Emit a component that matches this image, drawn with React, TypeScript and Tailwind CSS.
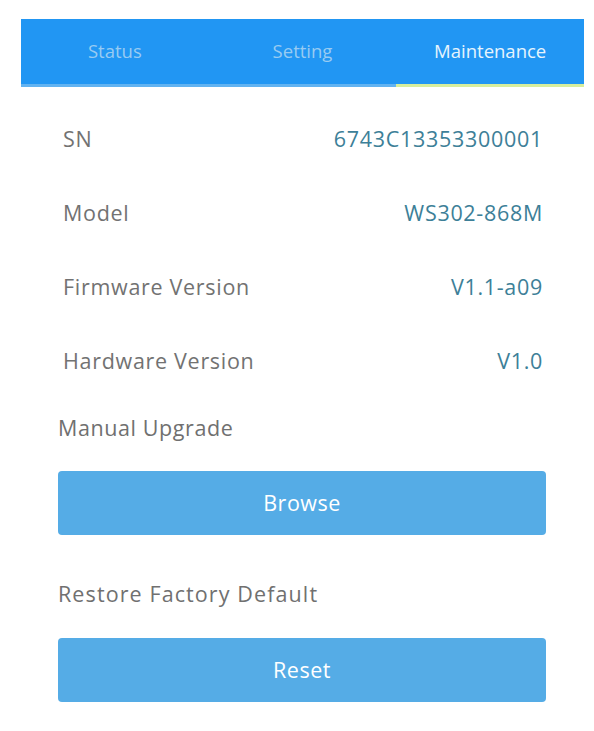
import React from 'react';

const tabs = [
    { label: 'Status', active: false },
    { label: 'Setting', active: false },
    { label: 'Maintenance', active: true },
];

const rows = [
    { label: 'SN', value: '6743C13353300001' },
    { label: 'Model', value: 'WS302-868M' },
    { label: 'Firmware Version', value: 'V1.1-a09' },
    { label: 'Hardware Version', value: 'V1.0' },
];

export default function App() {
    return (
        <div
            className="w-[594px] h-[731px] bg-white overflow-hidden"
            style={{ fontFamily: '"Open Sans", "Liberation Sans", sans-serif' }}
        >
            {/* tab bar */}
            <div className="pt-[19px] pl-[21px] pr-[10px]">
                <div className="flex h-[68px] bg-[#2196f3]">
                    {tabs.map((t) => (
                        <div key={t.label} className="flex-1 flex flex-col">
                            <div
                                className={
                                    t.active
                                        ? 'flex-1 flex items-center justify-center text-[18.5px] text-[#e6f4fd] pb-[1px]'
                                        : 'flex-1 flex items-center justify-center text-[18.5px] text-[#98cbf2] pb-[1px]'
                                }
                            >
                                {t.label}
                            </div>
                            <div className={t.active ? 'h-[3px] bg-[#d7ee9c]' : 'h-[3px] bg-[#62b3f1]'} />
                        </div>
                    ))}
                </div>
            </div>

            {/* info rows */}
            <div className="pt-[15px]">
                {rows.map((r) => (
                    <div
                        key={r.label}
                        className="h-[74px] flex items-center justify-between pl-[63px] pr-[51px] text-[21.5px] tracking-[0.7px]"
                    >
                        <span className="text-[#727272]">{r.label}</span>
                        <span className="text-[#3d7f98]">{r.value}</span>
                    </div>
                ))}
            </div>

            {/* actions */}
            <div className="pl-[58px] pr-[48px]">
                <div className="mt-[15px] h-[30px] flex items-center text-[21.5px] tracking-[0.6px] text-[#707070]">
                    Manual Upgrade
                </div>
                <button
                    type="button"
                    className="mt-[28px] w-full h-[64px] rounded-[4px] bg-[#55ace6] text-white text-[21.5px] tracking-[0.5px] flex items-center justify-center"
                >
                    Browse
                </button>
                <div className="mt-[44px] h-[30px] flex items-center text-[21.5px] tracking-[1.1px] text-[#707070]">
                    Restore Factory Default
                </div>
                <button
                    type="button"
                    className="mt-[29px] w-full h-[64px] rounded-[4px] bg-[#55ace6] text-white text-[21.5px] tracking-[0.5px] flex items-center justify-center"
                >
                    Reset
                </button>
            </div>
        </div>
    );
}
